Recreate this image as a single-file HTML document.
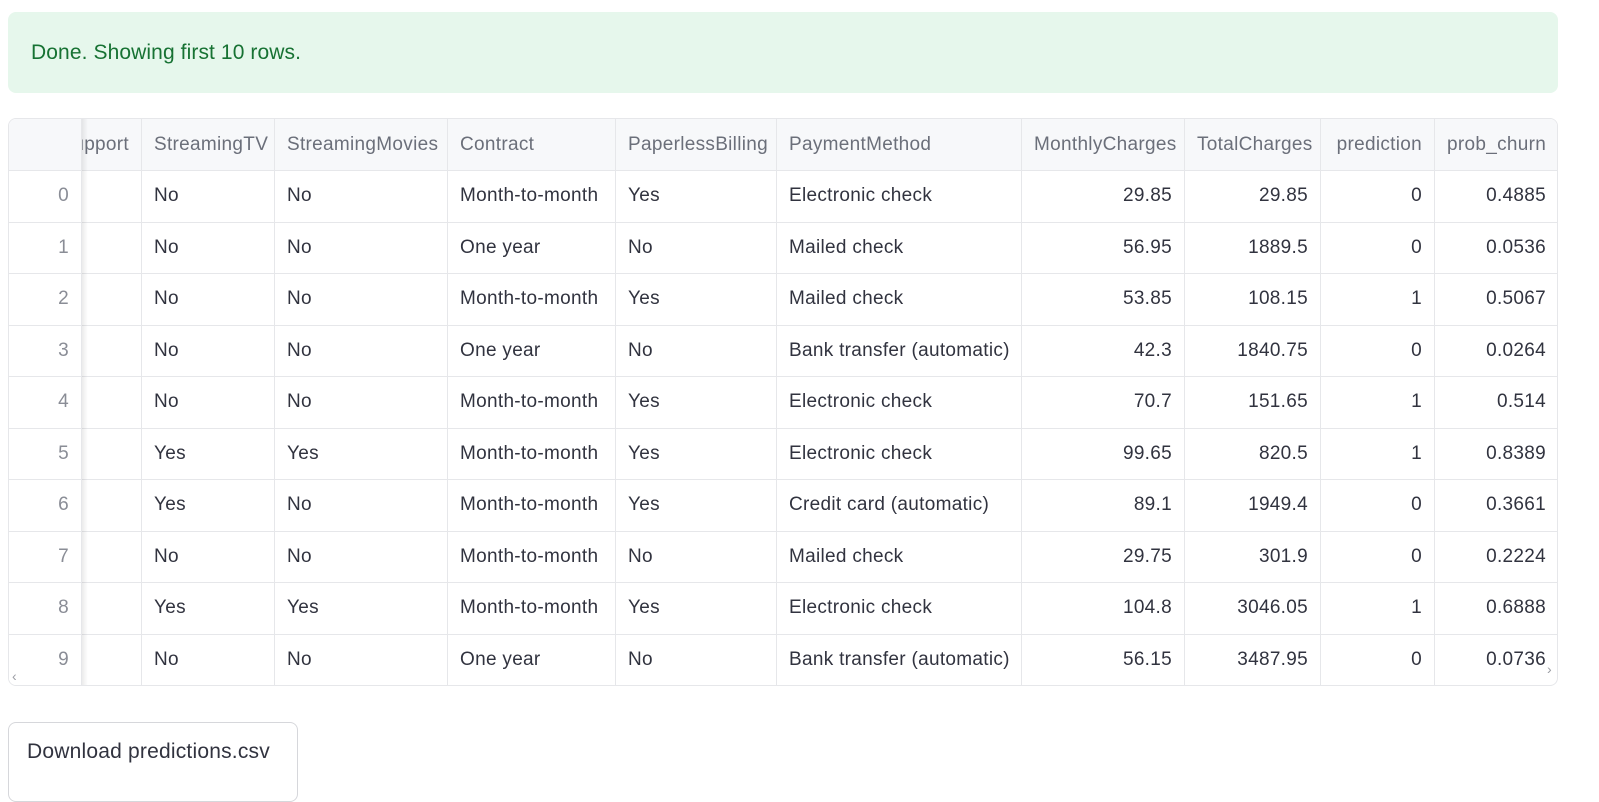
<!DOCTYPE html>
<html><head><meta charset="utf-8"><style>
body{margin:0;background:#fff;font-family:"Liberation Sans",sans-serif;width:1599px;height:786px;overflow:hidden;position:relative}
.alert{position:absolute;left:8px;top:12px;width:1550px;height:81px;background:#e6f7ec;border-radius:8px}
.alert span{position:absolute;left:23px;top:29px;font-size:21px;color:#177233;letter-spacing:0.1px}
.tbl{position:absolute;left:8px;top:118px;width:1548px;height:566px;border:1px solid #e6e7ea;border-radius:8px;overflow:hidden}
table{border-collapse:collapse;table-layout:fixed;width:1550px;position:absolute;left:-1px;top:-1px}
td,th{border:1px solid #e6e7ea;font-size:19px;letter-spacing:0.3px;padding:0 12px;white-space:nowrap;overflow:hidden;text-align:left;color:#31333f;font-weight:normal}
th{height:51px;background:#f7f8fa;color:#6b6f7a}
td{height:50.5px}
.r{text-align:right}
td.i{text-align:right;color:#8a8d96;background:#fff}
th.i{background:#f7f8fa}
.sh{position:absolute;left:73px;top:0;width:6px;height:566px;background:linear-gradient(to right,rgba(0,0,0,0.08),rgba(0,0,0,0));pointer-events:none}
.clip{position:relative}
.clip span{position:absolute;right:12px;top:15px}
.arr{position:absolute;color:#9a9ca3;font-size:14px}
.btn{position:absolute;left:8px;top:722px;width:290px;height:80px;border:1px solid #d6d7db;border-radius:8px;box-sizing:border-box}
.btn span{position:absolute;left:18px;top:17px;font-size:21px;color:#31333f;letter-spacing:0.2px}
</style></head><body>
<div class="alert"><span>Done. Showing first 10 rows.</span></div>
<div class="tbl">
<table>
<colgroup><col style="width:73px"><col style="width:60px"><col style="width:133px"><col style="width:173px"><col style="width:168px"><col style="width:161px"><col style="width:245px"><col style="width:163px"><col style="width:136px"><col style="width:114px"><col style="width:124px"></colgroup>
<tr><th class="i"></th><th class="clip"><span>TechSupport</span></th><th>StreamingTV</th><th>StreamingMovies</th><th>Contract</th><th>PaperlessBilling</th><th>PaymentMethod</th><th class="r">MonthlyCharges</th><th class="r">TotalCharges</th><th class="r">prediction</th><th class="r">prob_churn</th></tr>
<tr><td class="i">0</td><td></td><td>No</td><td>No</td><td>Month-to-month</td><td>Yes</td><td>Electronic check</td><td class="r">29.85</td><td class="r">29.85</td><td class="r">0</td><td class="r">0.4885</td></tr>
<tr><td class="i">1</td><td></td><td>No</td><td>No</td><td>One year</td><td>No</td><td>Mailed check</td><td class="r">56.95</td><td class="r">1889.5</td><td class="r">0</td><td class="r">0.0536</td></tr>
<tr><td class="i">2</td><td></td><td>No</td><td>No</td><td>Month-to-month</td><td>Yes</td><td>Mailed check</td><td class="r">53.85</td><td class="r">108.15</td><td class="r">1</td><td class="r">0.5067</td></tr>
<tr><td class="i">3</td><td></td><td>No</td><td>No</td><td>One year</td><td>No</td><td>Bank transfer (automatic)</td><td class="r">42.3</td><td class="r">1840.75</td><td class="r">0</td><td class="r">0.0264</td></tr>
<tr><td class="i">4</td><td></td><td>No</td><td>No</td><td>Month-to-month</td><td>Yes</td><td>Electronic check</td><td class="r">70.7</td><td class="r">151.65</td><td class="r">1</td><td class="r">0.514</td></tr>
<tr><td class="i">5</td><td></td><td>Yes</td><td>Yes</td><td>Month-to-month</td><td>Yes</td><td>Electronic check</td><td class="r">99.65</td><td class="r">820.5</td><td class="r">1</td><td class="r">0.8389</td></tr>
<tr><td class="i">6</td><td></td><td>Yes</td><td>No</td><td>Month-to-month</td><td>Yes</td><td>Credit card (automatic)</td><td class="r">89.1</td><td class="r">1949.4</td><td class="r">0</td><td class="r">0.3661</td></tr>
<tr><td class="i">7</td><td></td><td>No</td><td>No</td><td>Month-to-month</td><td>No</td><td>Mailed check</td><td class="r">29.75</td><td class="r">301.9</td><td class="r">0</td><td class="r">0.2224</td></tr>
<tr><td class="i">8</td><td></td><td>Yes</td><td>Yes</td><td>Month-to-month</td><td>Yes</td><td>Electronic check</td><td class="r">104.8</td><td class="r">3046.05</td><td class="r">1</td><td class="r">0.6888</td></tr>
<tr><td class="i">9</td><td></td><td>No</td><td>No</td><td>One year</td><td>No</td><td>Bank transfer (automatic)</td><td class="r">56.15</td><td class="r">3487.95</td><td class="r">0</td><td class="r">0.0736</td></tr>
</table>
<div class="sh"></div>
<span class="arr" style="left:3px;top:549px">‹</span>
<span class="arr" style="left:1538px;top:542px">›</span>
</div>
<div class="btn"><span>Download predictions.csv</span></div>
</body></html>
